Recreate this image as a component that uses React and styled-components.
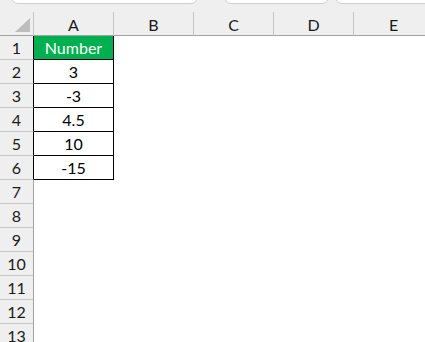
import React from "react";
import styled, { createGlobalStyle } from "styled-components";

const GlobalStyle = createGlobalStyle`
  body {
    margin: 0;
    background: #ffffff;
    font-family: Lato, "Liberation Sans", sans-serif;
  }
`;

const COLS = ["A", "B", "C", "D", "E"];
const DATA = ["Number", "3", "-3", "4.5", "10", "-15"];
const ROW_COUNT = 13;

const App = () => {
  return (
    <Sheet>
      <GlobalStyle />
      <TopStrip>
        <Tab left={11} width={187} />
        <Tab left={26} width={105} />
        <Tab left={6} width={100} />
      </TopStrip>
      <Grid>
        <Corner>
          <Triangle />
        </Corner>
        {COLS.map((c) => (
          <ColHead key={c}>{c}</ColHead>
        ))}
        {Array.from({ length: ROW_COUNT }, (_, i) => {
          const value = DATA[i];
          const inTable = value !== undefined;
          return (
            <React.Fragment key={i}>
              <RowHead inTable={inTable}>{i + 1}</RowHead>
              <Cell inTable={inTable} head={i === 0}>
                {value}
              </Cell>
              <Cell />
              <Cell />
              <Cell />
              <Cell />
            </React.Fragment>
          );
        })}
      </Grid>
    </Sheet>
  );
};

const Sheet = styled.div`
  width: 425px;
  height: 342px;
  overflow: hidden;
  background: #ffffff;
`;

const TopStrip = styled.div`
  display: flex;
  height: 12px;
  background: #efefef;
  overflow: hidden;
`;

const Tab = styled.div`
  flex: none;
  margin-left: ${(p) => p.left}px;
  width: ${(p) => p.width}px;
  height: 14px;
  margin-top: -10px;
  box-sizing: border-box;
  background: #ffffff;
  border: 1px solid #cfcfcf;
  border-radius: 7px;
`;

const Grid = styled.div`
  display: grid;
  grid-template-columns: 34px repeat(5, 80px);
  grid-template-rows: 24px;
  grid-auto-rows: 24px;
  font-size: 16px;
  color: #1a1a1a;
`;

const Corner = styled.div`
  position: relative;
  background: #efefef;
  border-bottom: 1px solid #a3a3a3;
  border-right: 1px solid #c4c4c4;
  box-sizing: border-box;
`;

const Triangle = styled.div`
  position: absolute;
  right: 3px;
  bottom: 3px;
  width: 0;
  height: 0;
  border-left: 15px solid transparent;
  border-bottom: 14px solid #bdbdbd;
`;

const ColHead = styled.div`
  display: flex;
  align-items: center;
  justify-content: center;
  box-sizing: border-box;
  background: #efefef;
  border-bottom: 1px solid #a3a3a3;
  border-right: 1px solid #c4c4c4;
  padding-top: 1px;
`;

const RowHead = styled.div`
  display: flex;
  align-items: center;
  justify-content: center;
  box-sizing: border-box;
  background: #efefef;
  border-bottom: 1px solid #c4c4c4;
  border-right: 1px solid ${(p) => (p.inTable ? "#000000" : "#a3a3a3")};
`;

const Cell = styled.div`
  display: flex;
  align-items: center;
  justify-content: center;
  box-sizing: border-box;
  background: ${(p) => (p.head ? "#00b050" : "#ffffff")};
  color: ${(p) => (p.head ? "#ffffff" : "#000000")};
  border-right: 1px solid ${(p) => (p.inTable ? "#000000" : "transparent")};
  border-bottom: 1px solid ${(p) => (p.inTable ? "#000000" : "transparent")};
`;

export default App;
